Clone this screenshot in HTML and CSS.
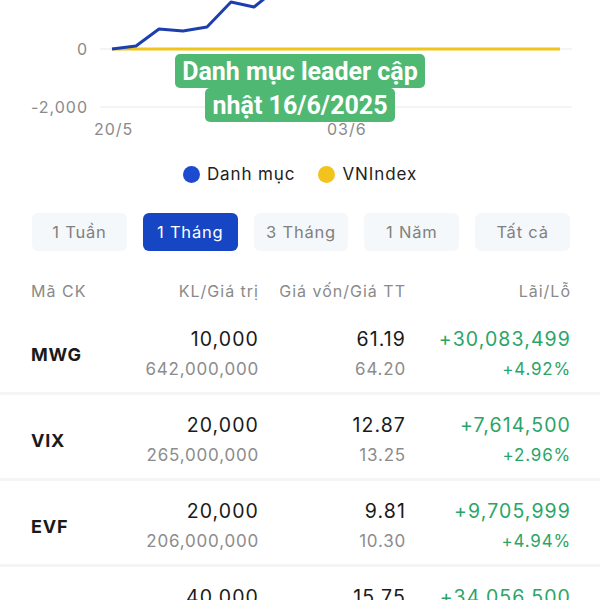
FILE: index.html
```html
<!doctype html>
<html>
<head>
<meta charset="utf-8">
<link rel="stylesheet" href="styles.css">
</head>
<body>
<div class="screen">

<div class="chart">
	<svg class="plot" width="600" height="150" viewBox="0 0 600 150">
		<line class="grid" x1="100" y1="49" x2="572" y2="49"/>
		<line class="grid" x1="100" y1="107" x2="572" y2="107"/>
		<text class="ylabel" x="88" y="-3">2,000</text>
		<text class="ylabel" x="88" y="55">0</text>
		<text class="ylabel" x="88" y="113">-2,000</text>
		<text class="xlabel" x="94" y="135">20/5</text>
		<text class="xlabel" x="327" y="135">03/6</text>
		<polyline class="vnindex" points="112,49 300,49 560,49"/>
		<polyline class="portfolio" points="112,49 136,46 159,29 183,31 207,27 231,2 254,7 280,-14"/>
	</svg>
	<!-- caption stuck on top of the chart -->
	<div class="caption"><span>Danh mục leader cập<br>nhật 16/6/2025</span></div>
</div>

<div class="legend">
	<div class="legend-item"><i class="dot blue"></i>Danh mục</div>
	<div class="legend-item"><i class="dot yellow"></i>VNIndex</div>
</div>

<div class="tabs">
	<div class="tab">1 Tuần</div>
	<div class="tab active">1 Tháng</div>
	<div class="tab">3 Tháng</div>
	<div class="tab">1 Năm</div>
	<div class="tab">Tất cả</div>
</div>

<div class="row head">
	<div class="sym">Mã CK</div>
	<div class="num">KL/Giá trị</div>
	<div class="num">Giá vốn/Giá TT</div>
	<div class="num">Lãi/Lỗ</div>
</div>

<div class="row">
	<div class="sym">MWG</div>
	<div class="num"><div class="top">10,000</div><div class="sub">642,000,000</div></div>
	<div class="num"><div class="top">61.19</div><div class="sub">64.20</div></div>
	<div class="num up"><div class="top">+30,083,499</div><div class="sub">+4.92%</div></div>
</div>
<div class="row">
	<div class="sym">VIX</div>
	<div class="num"><div class="top">20,000</div><div class="sub">265,000,000</div></div>
	<div class="num"><div class="top">12.87</div><div class="sub">13.25</div></div>
	<div class="num up"><div class="top">+7,614,500</div><div class="sub">+2.96%</div></div>
</div>
<div class="row">
	<div class="sym">EVF</div>
	<div class="num"><div class="top">20,000</div><div class="sub">206,000,000</div></div>
	<div class="num"><div class="top">9.81</div><div class="sub">10.30</div></div>
	<div class="num up"><div class="top">+9,705,999</div><div class="sub">+4.94%</div></div>
</div>
<div class="row">
	<div class="sym"></div>
	<div class="num"><div class="top">40,000</div><div class="sub">&nbsp;</div></div>
	<div class="num"><div class="top">15.75</div><div class="sub">&nbsp;</div></div>
	<div class="num up"><div class="top">+34,056,500</div><div class="sub">&nbsp;</div></div>
</div>

</div>
</body>
</html>
```
FILE: styles.css
```css
html, body{
	margin:0;
	padding:0;
	background:#fff;
}
body{
	font-family: Inter, "Noto Sans", sans-serif;
	color:#1a1a1a;
	overflow:hidden;
}
.screen{
	width:600px;
	height:600px;
	overflow:hidden;
}

/* chart */
.chart{
	position:relative;
	height:150px;
}
.plot{
	display:block;
}
.grid{
	stroke:#f1f1f1;
	stroke-width:1.5;
}
.ylabel{
	font-family: Inter, sans-serif;
	font-size:16px;
	letter-spacing:1px;
	fill:#8a8a8a;
	text-anchor:end;
}
.xlabel{
	font-family: Inter, sans-serif;
	font-size:16px;
	letter-spacing:1px;
	fill:#8a8a8a;
}
.portfolio{
	fill:none;
	stroke:#1d3fae;
	stroke-width:3;
	stroke-linejoin:round;
}
.vnindex{
	fill:none;
	stroke:#f0c419;
	stroke-width:3;
}
.caption{
	position:absolute;
	left:0;
	right:0;
	top:55px;
	text-align:center;
	font-family: Roboto, sans-serif;
	font-weight:700;
	font-size:25px;
	line-height:34px;
	color:#fff;
}
.caption span{
	background:#4fb872;
	padding:3px 7px 2px;
	border-radius:5px;
	-webkit-box-decoration-break:clone;
	box-decoration-break:clone;
}

/* legend */
.legend{
	height:48px;
	display:flex;
	align-items:center;
	justify-content:center;
	gap:23px;
	font-size:17px;
	letter-spacing:0.9px;
	color:#222;
}
.legend-item{
	display:flex;
	align-items:center;
	gap:7px;
}
.dot{
	width:17px;
	height:17px;
	border-radius:50%;
}
.dot.blue{ background:#1c4bcf; }
.dot.yellow{ background:#f2c31d; }

/* period tabs */
.tabs{
	display:flex;
	gap:16px;
	padding:0 30px 0 32px;
	margin-top:15px;
}
.tab{
	flex:1;
	height:38px;
	line-height:38px;
	text-align:center;
	background:#f5f8fa;
	border-radius:6px;
	font-size:16.5px;
	letter-spacing:0.8px;
	color:#808080;
}
.tab.active{
	background:#1646c4;
	color:#fff;
}

/* table */
.row{
	display:grid;
	grid-template-columns:100px 127px 147px 165px;
	align-items:center;
	padding:17px 30px 10px 31px;
	border-bottom:3px solid #f5f5f6;
}
.row.head{
	padding:30px 30px 8px 31px;
	border-bottom:none;
	font-size:16px;
	line-height:20px;
	letter-spacing:1px;
	color:#8a8a8a;
}
.sym{
	font-weight:700;
	font-size:18px;
	letter-spacing:0.8px;
}
.head .sym{
	font-weight:400;
	font-size:16px;
	letter-spacing:1px;
}
.num{
	text-align:right;
	margin-right:-1px;
}
.top{
	font-size:19.5px;
	line-height:26px;
	letter-spacing:1.1px;
}
.sub{
	font-size:17px;
	line-height:26px;
	letter-spacing:0.8px;
	margin-top:4px;
	color:#8c8c8c;
}
.up .top, .up .sub{
	color:#2aa568;
}
```
